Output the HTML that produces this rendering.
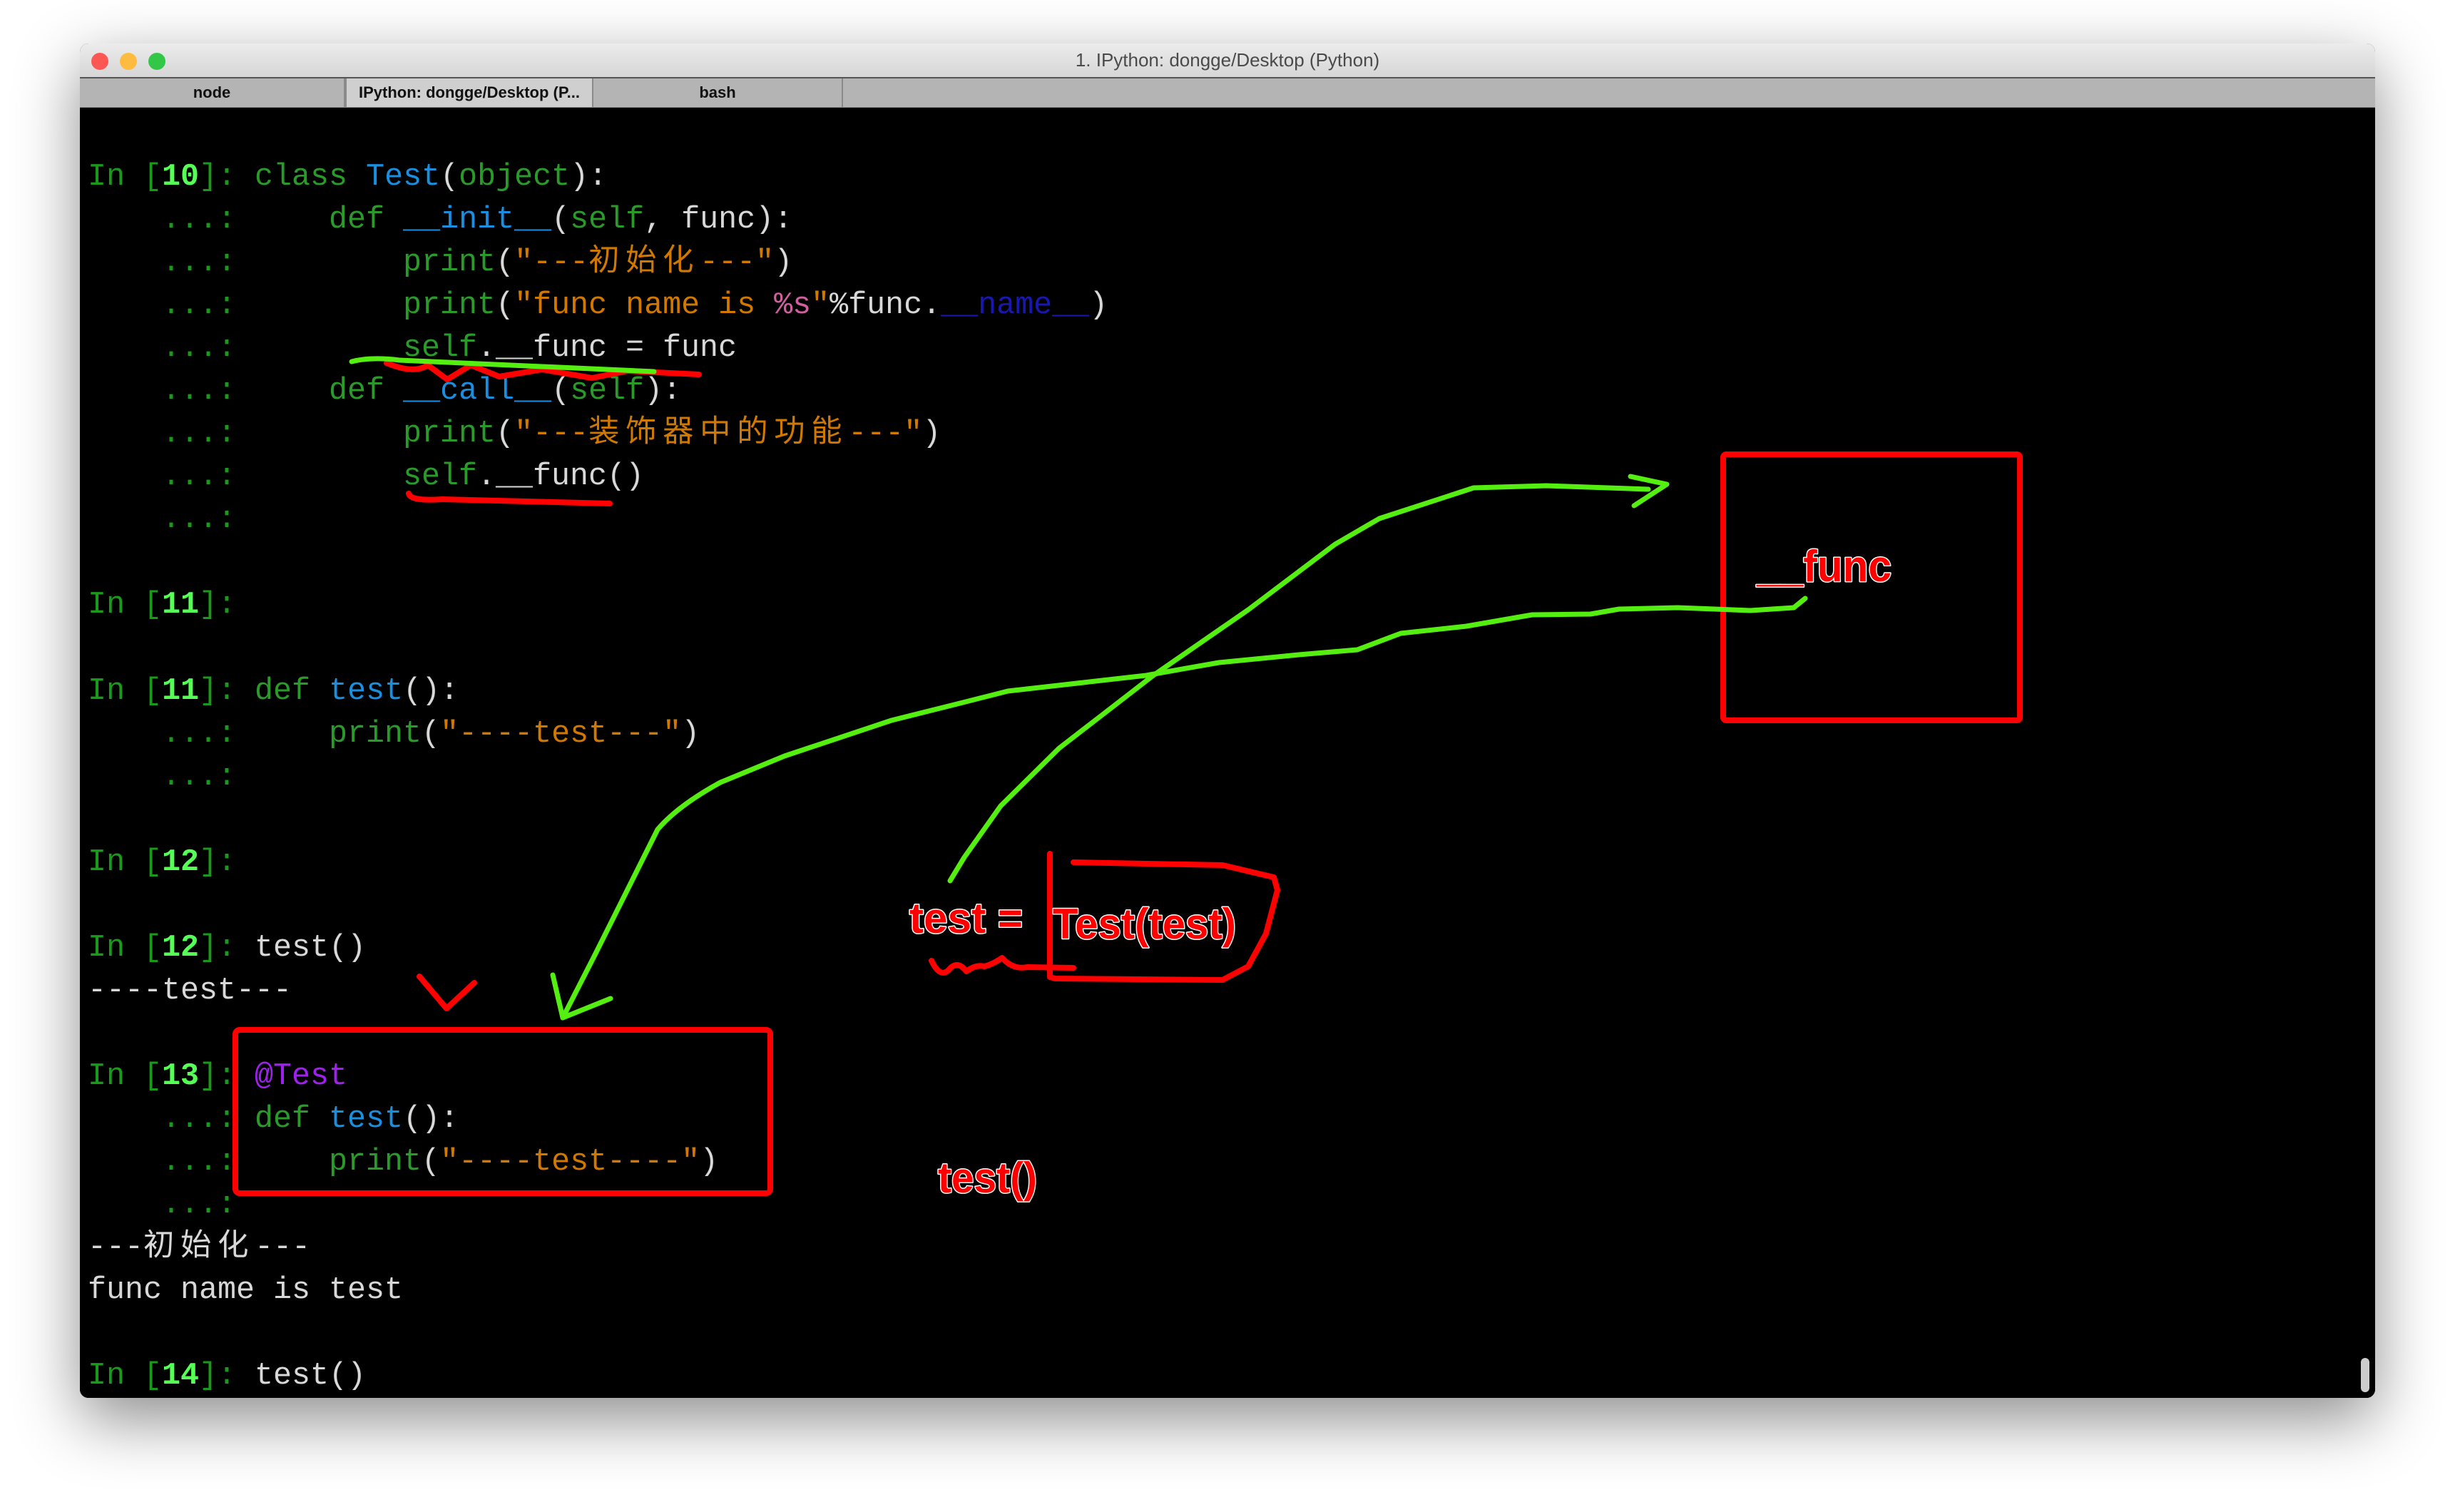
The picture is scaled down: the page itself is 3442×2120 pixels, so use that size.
<!DOCTYPE html>
<html><head><meta charset="utf-8"><style>
html,body{margin:0;padding:0;background:#fff;width:3442px;height:2120px;overflow:hidden;position:relative}
.win{position:absolute;left:112px;top:61px;width:3218px;height:1899px;border-radius:12px;overflow:hidden;box-shadow:0 30px 90px rgba(0,0,0,0.45);background:#000}
.title{position:absolute;left:0;top:0;width:100%;height:47px;background:linear-gradient(#ececec,#d6d6d6);border-bottom:2px solid #555}
.title .t{position:absolute;left:0;width:100%;top:8px;text-align:center;font:26px "Liberation Sans",sans-serif;color:#4a4a4a}
.dot{position:absolute;top:13px;width:24px;height:24px;border-radius:50%}
.tabs{position:absolute;left:0;top:49px;width:100%;height:40px;background:#b4b4b4;border-bottom:2px solid #888}
.tab{position:absolute;top:0;height:40px;font:bold 22px "Liberation Sans",sans-serif;color:#111;text-align:center;line-height:40px;border-right:2px solid #8a8a8a;box-sizing:border-box}
.term{position:absolute;left:0;top:90px;width:100%;height:1809px;background:#000}
pre{position:absolute;left:11px;top:68px;margin:0;font-family:"Liberation Mono","Noto Sans CJK SC",monospace;font-size:43.33px;line-height:60.05px;color:#d8d8d8}
.c{letter-spacing:8.7px}
.p{color:#1a9a1a}.n{color:#55ff55;font-weight:bold}.k{color:#2a9a2a}.b{color:#1a8fe0}.s{color:#d07800}.d{color:#1818b0}.m{color:#d060a0}.v{color:#a020f0}
svg{position:absolute;left:0;top:0}
</style></head><body>
<div class="win">
 <div class="title">
  <div class="dot" style="left:16px;background:#fc5753"></div>
  <div class="dot" style="left:56px;background:#fdbc40"></div>
  <div class="dot" style="left:96px;background:#33c748"></div>
  <div class="t">1. IPython: dongge/Desktop (Python)</div>
 </div>
 <div class="tabs">
  <div class="tab" style="left:0;width:372px">node</div>
  <div class="tab" style="left:372px;width:348px;background:#cfcfcf;border-left:2px solid #8a8a8a">IPython: dongge/Desktop (P...</div>
  <div class="tab" style="left:720px;width:350px">bash</div>
 </div>
 <div class="term">
<pre><span class="p">In [</span><span class="n">10</span><span class="p">]: </span><span class="k">class</span> <span class="b">Test</span>(<span class="k">object</span>):
<span class="p">    ...: </span>    <span class="k">def</span> <span class="b">__init__</span>(<span class="k">self</span>, func):
<span class="p">    ...: </span>        <span class="k">print</span>(<span class="s">"---<span class="c">初始化</span>---"</span>)
<span class="p">    ...: </span>        <span class="k">print</span>(<span class="s">"func name is </span><span class="m">%s</span><span class="s">"</span>%func.<span class="d">__name__</span>)
<span class="p">    ...: </span>        <span class="k">self</span>.__func = func
<span class="p">    ...: </span>    <span class="k">def</span> <span class="b">__call__</span>(<span class="k">self</span>):
<span class="p">    ...: </span>        <span class="k">print</span>(<span class="s">"---<span class="c">装饰器中的功能</span>---"</span>)
<span class="p">    ...: </span>        <span class="k">self</span>.__func()
<span class="p">    ...: </span>

<span class="p">In [</span><span class="n">11</span><span class="p">]: </span>

<span class="p">In [</span><span class="n">11</span><span class="p">]: </span><span class="k">def</span> <span class="b">test</span>():
<span class="p">    ...: </span>    <span class="k">print</span>(<span class="s">"----test---"</span>)
<span class="p">    ...: </span>

<span class="p">In [</span><span class="n">12</span><span class="p">]: </span>

<span class="p">In [</span><span class="n">12</span><span class="p">]: </span>test()
----test---

<span class="p">In [</span><span class="n">13</span><span class="p">]: </span><span class="v">@Test</span>
<span class="p">    ...: </span><span class="k">def</span> <span class="b">test</span>():
<span class="p">    ...: </span>    <span class="k">print</span>(<span class="s">"----test----"</span>)
<span class="p">    ...: </span>
---<span class="c">初始化</span>---
func name is test

<span class="p">In [</span><span class="n">14</span><span class="p">]: </span>test()</pre>
  <div style="position:absolute;right:8px;bottom:8px;width:12px;height:48px;border-radius:6px;background:#ccc"></div>
 </div>
</div>
<svg width="3442" height="2120" viewBox="0 0 3442 2120" fill="none" stroke-linecap="round" stroke-linejoin="round">
 <g stroke="#ff0000" stroke-width="8">
  <rect x="2416" y="637" width="416" height="373" rx="4"/>
  <rect x="330" y="1444" width="750" height="229" rx="6"/>
  <path d="M1472 1197 L1472 1370 L1480 1372 L1714 1374 L1750 1355 L1775 1309 L1791 1248 L1786 1230 L1714 1213 L1505 1209"/>
  <path d="M1306 1347 Q1318 1372 1330 1360 Q1342 1345 1355 1362 Q1368 1352 1380 1355 Q1392 1352 1405 1343 Q1420 1360 1440 1356 L1505 1357"/>
  <path d="M588 1369 L626 1414 L665 1378"/>
  <path d="M542 509 Q580 525 600 512 L627 532 L660 512 L700 528 L760 518 L830 530 L880 520 L980 525"/>
  <path d="M573 692 Q575 703 620 700 L855 706"/>
 </g>
 <g stroke="#55ee11" stroke-width="7">
  <path d="M493 507 Q520 500 560 505 L917 521"/>
  <path d="M1332 1235 L1352 1202 L1403 1130 L1485 1049 L1617 947 L1750 855 L1872 763 L1934 727 L2066 684 L2168 681 L2311 686"/>
  <path d="M2286 668 L2337 679 L2291 709"/>
  <path d="M2531 839 L2515 852 L2454 856 L2352 852 L2270 854 L2230 861 L2148 862 L2056 878 L1964 888 L1903 911 L1821 918 L1709 929 L1607 947 L1413 969 L1342 987 L1250 1010 L1100 1060 L1010 1097 Q950 1130 922 1163 L878 1251 L834 1339 L789 1427"/>
  <path d="M775 1367 L789 1427 L856 1400"/>
 </g>
 <g font-family="Liberation Sans,sans-serif" font-weight="bold" fill="#ff0000" stroke="#ffffff" stroke-width="3" paint-order="stroke">
  <text x="2463" y="815" font-size="62" textLength="189" lengthAdjust="spacingAndGlyphs">__func</text>
  <text x="1275" y="1308" font-size="60" textLength="159" lengthAdjust="spacingAndGlyphs">test =</text>
  <text x="1476" y="1316" font-size="60" textLength="257" lengthAdjust="spacingAndGlyphs">Test(test)</text>
  <text x="1315" y="1672" font-size="60" textLength="139" lengthAdjust="spacingAndGlyphs">test()</text>
 </g>
</svg>
</body></html>
